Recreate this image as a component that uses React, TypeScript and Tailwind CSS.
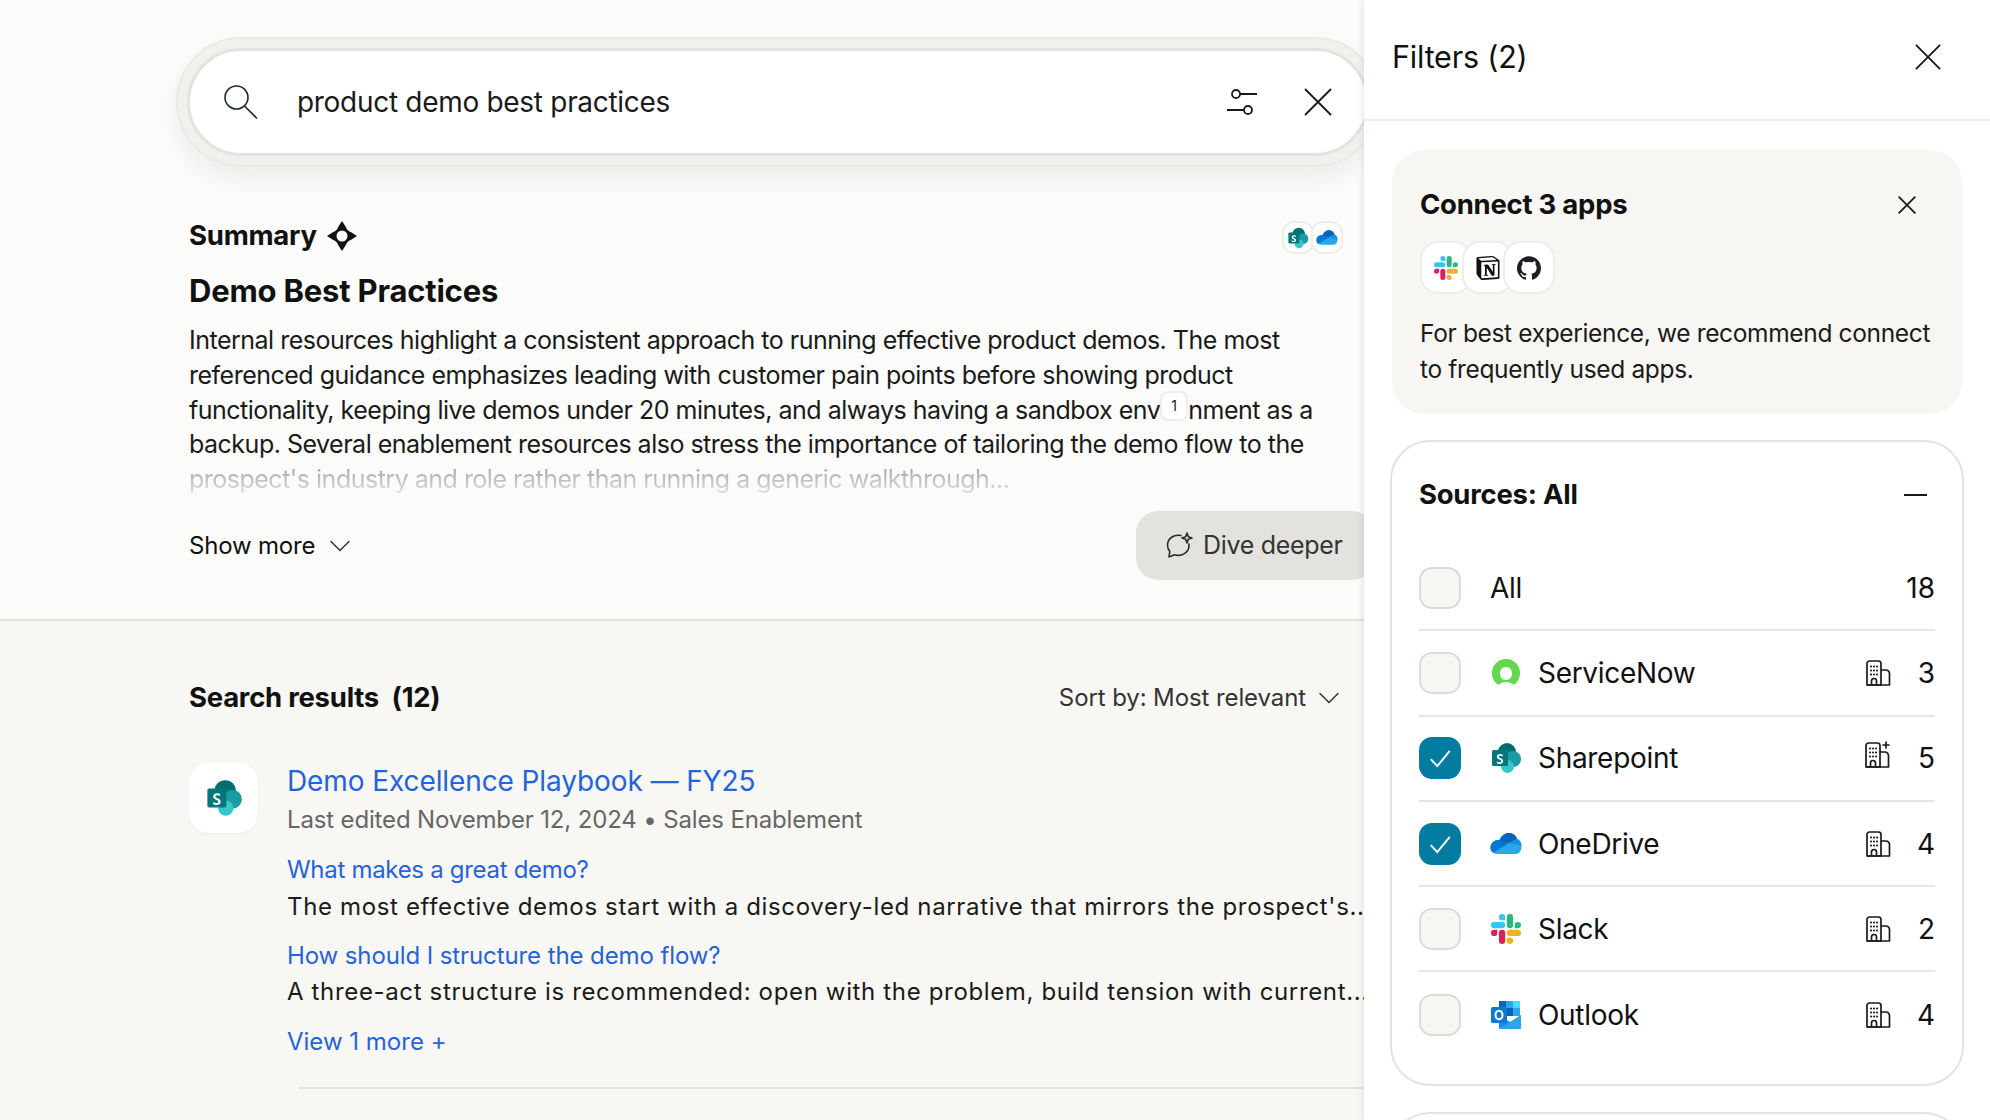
import React from "react";
import { ChevronDown } from "lucide-react";
import { SiGithub, SiNotion } from "react-icons/si";

const slackPaths = [
  { fill: "#E01E5A", d: "M5.042 15.165a2.528 2.528 0 0 1-2.52 2.523A2.528 2.528 0 0 1 0 15.165a2.527 2.527 0 0 1 2.522-2.52h2.52v2.52zM6.313 15.165a2.527 2.527 0 0 1 2.521-2.52 2.527 2.527 0 0 1 2.521 2.52v6.313A2.528 2.528 0 0 1 8.834 24a2.528 2.528 0 0 1-2.521-2.522v-6.313z" },
  { fill: "#36C5F0", d: "M8.834 5.042a2.528 2.528 0 0 1-2.521-2.52A2.528 2.528 0 0 1 8.834 0a2.528 2.528 0 0 1 2.521 2.522v2.52H8.834zM8.834 6.313a2.528 2.528 0 0 1 2.521 2.521 2.528 2.528 0 0 1-2.521 2.521H2.522A2.528 2.528 0 0 1 0 8.834a2.528 2.528 0 0 1 2.522-2.521h6.312z" },
  { fill: "#2EB67D", d: "M18.956 8.834a2.528 2.528 0 0 1 2.522-2.521A2.528 2.528 0 0 1 24 8.834a2.528 2.528 0 0 1-2.522 2.521h-2.522V8.834zM17.688 8.834a2.528 2.528 0 0 1-2.523 2.521 2.527 2.527 0 0 1-2.52-2.521V2.522A2.527 2.527 0 0 1 15.165 0a2.528 2.528 0 0 1 2.523 2.522v6.312z" },
  { fill: "#ECB22E", d: "M15.165 18.956a2.528 2.528 0 0 1 2.523 2.522A2.528 2.528 0 0 1 15.165 24a2.527 2.527 0 0 1-2.52-2.522v-2.522h2.52zM15.165 17.688a2.527 2.527 0 0 1-2.52-2.523 2.526 2.526 0 0 1 2.52-2.52h6.313A2.527 2.527 0 0 1 24 15.165a2.528 2.528 0 0 1-2.522 2.523h-6.313z" },
];

function SlackIcon({ className }: { className?: string }) {
  return (
    <svg viewBox="0 0 24 24" className={className}>
      {slackPaths.map((p, i) => (
        <path key={i} d={p.d} fill={p.fill} />
      ))}
    </svg>
  );
}

function SharepointIcon({ className }: { className?: string }) {
  return (
    <svg viewBox="0 0 32 32" className={className}>
      <circle cx="17" cy="10" r="9" fill="#036c70" />
      <circle cx="23" cy="17" r="8" fill="#1a9ba1" />
      <circle cx="17.5" cy="24.5" r="6.5" fill="#37c6d0" />
      <rect x="2" y="8" width="16" height="16" rx="1.5" fill="#03787c" />
      <path d="M6.8 19.4c.9.6 1.9.9 2.8.9 1.1 0 1.7-.4 1.7-1.1 0-.6-.4-1-1.7-1.5-1.8-.7-2.7-1.5-2.7-2.9 0-1.6 1.3-2.7 3.3-2.7 1 0 1.9.2 2.5.5v1.8c-.7-.4-1.5-.7-2.4-.7-1 0-1.5.4-1.5 1 0 .6.5.9 1.8 1.5 1.8.7 2.6 1.5 2.6 2.9 0 1.8-1.4 2.8-3.6 2.8-1 0-2-.2-2.6-.6z" fill="#fff" />
    </svg>
  );
}

function OneDriveIcon({ className }: { className?: string }) {
  const id = React.useId();
  return (
    <svg viewBox="0 0 32 22" className={className}>
      <defs>
        <clipPath id={id}>
          <path d="M7 21.5C3 21.5.5 18.5.5 15 .5 10.5 4.5 7 9.5 7.5 11.5 3 15 .5 19 .5c4 0 7 2.500 8 6 3 1 4.500 4 4.500 7.500 0 4.500-2.500 7.500-5.500 7.500z" />
        </clipPath>
      </defs>
      <g clipPath={`url(#${id})`}>
        <rect width="32" height="22" fill="#28a8ea" />
        <polygon points="0,0 19,0 19,10.500 2,21 0,21" fill="#0078d4" />
        <polygon points="9.500,8 17,0 27,0 27,6.500 19,10.500" fill="#0364b8" />
        <polygon points="27,6.500 32,6.500 32,13.500 19,10.500" fill="#1490df" />
      </g>
    </svg>
  );
}

function OutlookIcon({ className }: { className?: string }) {
  return (
    <svg viewBox="0 0 32 32" className={className}>
      <path d="M9 2h21v15H9z" fill="#0078d4" />
      <path d="M9 2h7v7H9z" fill="#0364b8" />
      <path d="M23 2h7v7h-7z" fill="#50d9ff" />
      <path d="M16 2h7v7h-7z" fill="#28a8ea" />
      <path d="M16 9h7v8h-7z" fill="#0364b8" />
      <path d="M23 9h7v8h-7z" fill="#28a8ea" />
      <path d="M9 16l11 7 11-7v13a1 1 0 0 1-1 1H10a1 1 0 0 1-1-1z" fill="#1490df" />
      <path d="M9 30l22-13v12a1 1 0 0 1-1 1z" fill="#28a8ea" />
      <rect x="1" y="8" width="16" height="16" rx="1.5" fill="#0f78d4" />
      <ellipse cx="9" cy="16" rx="3.5" ry="4.3" fill="none" stroke="#fff" strokeWidth="2" />
    </svg>
  );
}

function ServiceNowIcon({ className }: { className?: string }) {
  return (
    <svg viewBox="0 0 32 32" className={className}>
      <path
        d="M16 1C7.500 1 1 7.700 1 16c0 4.500 1.900 8.500 5 11.500.9.900 2.200 1 3.200.2 1.900-1.400 4.200-2.200 6.800-2.200s4.900.8 6.800 2.200c1 .8 2.300.7 3.200-.2 3.100-3 5-7 5-11.500C31 7.700 24.500 1 16 1zm0 22.500c-3.800 0-6.500-3-6.500-7s2.700-7 6.500-7 6.500 3 6.500 7-2.700 7-6.500 7z"
        fill="#62d84e"
      />
    </svg>
  );
}

function BuildingIcon({ plus }: { plus?: boolean }) {
  return (
    <svg viewBox="0 0 28 28" fill="none" stroke="#1a1a1a" strokeWidth="1.7" strokeLinejoin="round" className="w-[28px] h-[28px]">
      <path d="M3 26V4.500A2.500 2.500 0 0 1 5.500 2h9A2.500 2.500 0 0 1 17 4.500V26z" />
      <path d="M17 11h5a3.500 3.500 0 0 1 3.500 3.500V26H3" />
      <path d="M7.500 26v-4a2.500 2.500 0 0 1 5 0v4" />
      <path d="M7 7.500h.1M10 7.500h.1M13 7.500h.1M7 11.500h.1M10 11.500h.1M13 11.500h.1M7 15.500h.1M10 15.500h.1M13 15.500h.1" strokeWidth="2" strokeLinecap="round" />
      {plus && <path d="M23 1v6M20 4h6" strokeLinecap="round" />}
    </svg>
  );
}

function SearchIcon() {
  return (
    <svg viewBox="0 0 34 34" fill="none" stroke="#1f2a37" strokeWidth="1.6" className="w-[34px] h-[34px]">
      <circle cx="12.500" cy="12.500" r="11.500" />
      <path d="M20.500 21l12.500 12.500" />
    </svg>
  );
}

function SlidersIcon() {
  return (
    <svg viewBox="0 0 32 28" fill="none" stroke="#1a1a1a" strokeWidth="1.8" className="w-[32px] h-[28px]">
      <circle cx="10" cy="6" r="4" />
      <path d="M14 6h17M1 22h17" />
      <circle cx="22" cy="22" r="4" />
    </svg>
  );
}

function CrossIcon({ className, weight }: { className: string; weight: number }) {
  return (
    <svg viewBox="0 0 28 28" fill="none" stroke="#1a1a1a" strokeWidth={weight} className={className}>
      <path d="M1 1l26 26M27 1L1 27" />
    </svg>
  );
}

function SparkIcon() {
  return (
    <svg viewBox="0 0 30 30" className="w-[30px] h-[30px]">
      <path d="M15 0l3.600 5.400a9 9 0 0 0 6 6L30 15l-5.400 3.600a9 9 0 0 0-6 6L15 30l-3.600-5.400a9 9 0 0 0-6-6L0 15l5.400-3.600a9 9 0 0 0 6-6zM15 9.500a5.500 5.500 0 1 0 0 11 5.500 5.500 0 0 0 0-11z" fill="#111" fillRule="evenodd" />
    </svg>
  );
}

function ChatSparkIcon() {
  return (
    <svg viewBox="0 0 28 28" fill="none" stroke="#2a2a2a" strokeWidth="1.6" strokeLinecap="round" strokeLinejoin="round" className="w-[28px] h-[28px]">
      <path d="M16 3.500C9 2 2.500 6.500 2.500 13c0 2.500.8 4.700 2.300 6.500L4 25l5.500-2.200c7 2.200 14.500-2.300 14.500-9.300 0-.5 0-1-.1-1.500" />
      <path d="M22 1l1.300 3.700L27 6l-3.700 1.300L22 11l-1.300-3.700L17 6l3.700-1.300z" />
    </svg>
  );
}

function Chip({ children, className }: { children: React.ReactNode; className: string }) {
  return (
    <div className={`flex items-center justify-center bg-white border-2 border-[#eeede9] ${className}`}>{children}</div>
  );
}

type Source = {
  name: string;
  count: number;
  checked?: boolean;
  plus?: boolean;
  icon?: React.ReactNode;
};

const sources: Source[] = [
  { name: "All", count: 18 },
  { name: "ServiceNow", count: 3, icon: <ServiceNowIcon className="w-[30px] h-[30px]" /> },
  { name: "Sharepoint", count: 5, checked: true, plus: true, icon: <SharepointIcon className="w-[32px] h-[32px]" /> },
  { name: "OneDrive", count: 4, checked: true, icon: <OneDriveIcon className="w-[34px] h-[23px]" /> },
  { name: "Slack", count: 2, icon: <SlackIcon className="w-[30px] h-[30px]" /> },
  { name: "Outlook", count: 4, icon: <OutlookIcon className="w-[32px] h-[32px]" /> },
];

function SourceRow({ source, last }: { source: Source; last: boolean }) {
  return (
    <div className={`flex items-center h-[85.3px] ${last ? "" : "border-b-2 border-[#e6e5e1]"}`}>
      {source.checked ? (
        <div className="w-[42px] h-[42px] rounded-[13px] bg-[#047c9f] flex items-center justify-center">
          <svg viewBox="0 0 24 24" fill="none" stroke="#fff" strokeWidth="1.8" className="w-[26px] h-[26px]">
            <path d="M3.500 13l6 6.500L21 5.500" />
          </svg>
        </div>
      ) : (
        <div className="w-[42px] h-[42px] rounded-[13px] bg-[#f7f6f3] border-2 border-[#dcdbd6]" />
      )}
      {source.icon ? (
        <div className="w-[32px] ml-[29px] mr-[16px] flex justify-center">{source.icon}</div>
      ) : (
        <div className="w-[29px]" />
      )}
      <span className="flex-1 text-[28px] tracking-[-0.3px] text-[#111]">{source.name}</span>
      {source.icon && (
        <span className={source.plus ? "mr-[10px] -mt-[6px]" : "mr-[9px]"}>
          <BuildingIcon plus={source.plus} />
        </span>
      )}
      <span className="text-[28px] text-[#111] w-[34px] text-right">{source.count}</span>
    </div>
  );
}

export default function App() {
  return (
    <div className="w-[1990px] h-[1120px] overflow-hidden flex bg-[#fbfbf9] text-[#111] font-['Inter','Liberation_Sans',sans-serif]">
      <main className="w-[1364px] shrink-0 flex flex-col overflow-hidden">
        <section className="pt-[37px] pl-[176px] h-[621px] shrink-0 border-b-2 border-[#e4e3df]">
          <div className="w-[1204px] h-[130px] rounded-[65px] bg-[#f1f0ec] border-2 border-[#eae9e5] p-[9px] shadow-[0_12px_24px_rgba(0,0,0,0.06)]">
            <div className="h-full rounded-[56px] bg-white border-[3px] border-[#e4e3df] flex items-center pl-[34px] pr-[34px]">
              <SearchIcon />
              <span className="ml-[39px] flex-1 text-[28px] tracking-[-0.3px] text-[#1a1a1a]">product demo best practices</span>
              <SlidersIcon />
              <CrossIcon className="ml-[46px] w-[28px] h-[28px]" weight={1.8} />
            </div>
          </div>

          <div className="pl-[13px] pr-[21px] mt-[51px]">
            <div className="flex items-center justify-between h-[36px]">
              <div className="flex items-center gap-[10px]">
                <span className="text-[27.5px] font-bold tracking-[-0.25px]">Summary</span>
                <SparkIcon />
              </div>
              <div className="flex -space-x-[3px] mt-[3px]">
                <Chip className="w-[32px] h-[33px] rounded-[12px]">
                  <SharepointIcon className="w-[22px] h-[22px]" />
                </Chip>
                <Chip className="w-[32px] h-[33px] rounded-[12px]">
                  <OneDriveIcon className="w-[22px] h-[15px]" />
                </Chip>
              </div>
            </div>
            <h1 className="mt-[17px] text-[31px] leading-[40px] font-bold tracking-[-0.2px]">Demo Best Practices</h1>
            <div className="mt-[12px] text-[25px] leading-[34.8px] tracking-[-0.5px] text-[#1a1a1a]">
              <p>Internal resources highlight a consistent approach to running effective product demos. The most</p>
              <p>referenced guidance emphasizes leading with customer pain points before showing product</p>
              <p>
                functionality, keeping live demos under 20 minutes, and always having a sandbox env
                <span className="inline-flex items-center justify-center align-top w-[28px] h-[30px] -mt-[2px] rounded-[8px] bg-white border-2 border-[#eeede9] text-[14px] leading-none tracking-normal">
                  1
                </span>
                nment as a
              </p>
              <p>backup. Several enablement resources also stress the importance of tailoring the demo flow to the</p>
              <p className="bg-gradient-to-b from-[#9a9a98] to-[#e8e8e6] bg-clip-text text-transparent">
                prospect's industry and role rather than running a generic walkthrough...
              </p>
            </div>
            <div className="flex items-center justify-between mt-[14.5px] -mr-[21px]">
              <div className="flex items-center gap-[7px] text-[24px] tracking-[-0.2px]">
                Show more
                <ChevronDown className="w-[36px] h-[36px] text-[#333]" strokeWidth={1} />
              </div>
              <div className="w-[238px] h-[69px] -mr-[10px] shrink-0 rounded-[22px] bg-[#e3e2de] flex items-center gap-[10px] pl-[29px] text-[25px] tracking-[-0.3px] text-[#333]">
                <ChatSparkIcon />
                Dive deeper
              </div>
            </div>
          </div>
        </section>

        <section className="flex-1 bg-[#f8f7f4] pl-[189px]">
          <div className="flex items-center justify-between h-[36px] mt-[59px] pr-[17px]">
            <span className="text-[27.5px] font-bold tracking-[-0.25px]">
              Search results&nbsp; (12)
            </span>
            <div className="flex items-center gap-[5px] text-[24px] tracking-[-0.1px] text-[#333]">
              Sort by: Most relevant
              <ChevronDown className="w-[36px] h-[36px] text-[#333]" strokeWidth={1} />
            </div>
          </div>
          <div className="flex mt-[47px]">
            <div className="w-[69px] h-[70px] shrink-0 rounded-[20px] bg-white shadow-[0_1px_3px_rgba(0,0,0,0.05)] flex items-center justify-center">
              <SharepointIcon className="w-[38px] h-[38px]" />
            </div>
            <div className="ml-[29px] w-[1077px] overflow-hidden whitespace-nowrap">
              <div className="text-[28px] leading-[36px] tracking-[-0.1px] text-[#2563d9]">Demo Excellence Playbook — FY25</div>
              <div className="mt-[3px] text-[24px] leading-[36px] tracking-[-0.15px] text-[#666]">Last edited November 12, 2024 • Sales Enablement</div>
              <div className="mt-[15px] text-[24px] leading-[34px] tracking-[-0.3px] text-[#2563d9]">What makes a great demo?</div>
              <div className="mt-[3px] text-[24px] leading-[34px] text-[#1a1a1a] tracking-[0.65px]">The most effective demos start with a discovery-led narrative that mirrors the prospect's...</div>
              <div className="mt-[15px] text-[24px] leading-[34px] tracking-[-0.1px] text-[#2563d9]">How should I structure the demo flow?</div>
              <div className="mt-[2px] text-[24px] leading-[34px] text-[#1a1a1a] tracking-[0.65px]">A three-act structure is recommended: open with the problem, build tension with current...</div>
              <div className="mt-[16px] text-[24px] leading-[34px] text-[#2563d9]">View 1 more +</div>
            </div>
          </div>
          <div className="mt-[28px] ml-[110px] border-t-2 border-[#e4e3df]" />
        </section>
      </main>

      <aside className="relative z-10 w-[626px] shrink-0 bg-white shadow-[-2px_0_6px_rgba(0,0,0,0.08)] flex flex-col">
        <header className="h-[121px] shrink-0 border-b-2 border-[#eeede9] flex items-center justify-between pb-[6px] pl-[28px] pr-[49px]">
          <span className="text-[30.5px] tracking-[-0.2px]">Filters (2)</span>
          <CrossIcon className="w-[26px] h-[26px]" weight={2} />
        </header>
        <div className="px-[28px] pt-[29px]">
          <div className="w-[570px] h-[264px] rounded-[32px] bg-[#f7f6f3] pl-[28px] pr-[20px] pt-[37px]">
            <div className="flex items-center justify-between h-[36px]">
              <span className="text-[27.5px] font-bold tracking-[-0.25px]">Connect 3 apps</span>
              <CrossIcon className="w-[18px] h-[18px] mr-[26px]" weight={2.8} />
            </div>
            <div className="flex mt-[18px] -space-x-[10.5px]">
              <Chip className="w-[52px] h-[53px] rounded-[18px]">
                <SlackIcon className="w-[24px] h-[24px]" />
              </Chip>
              <Chip className="w-[52px] h-[53px] rounded-[18px]">
                <SiNotion className="w-[24px] h-[24px] text-[#111]" />
              </Chip>
              <Chip className="w-[52px] h-[53px] rounded-[18px]">
                <SiGithub className="w-[24px] h-[24px] text-[#1b1f23]" />
              </Chip>
            </div>
            <p className="mt-[21px] text-[24.5px] leading-[36px] tracking-[-0.35px] text-[#1a1a1a]">
              For best experience, we recommend connect to frequently used apps.
            </p>
          </div>
          <div className="w-[574px] -ml-[2px] mt-[26px] h-[646px] rounded-[40px] border-2 border-[#e4e3df] px-[27px] pt-[35px]">
            <div className="flex items-center justify-between h-[36px]">
              <span className="text-[27.5px] font-bold tracking-[-0.25px]">Sources: All</span>
              <div className="w-[23px] h-[2px] bg-[#1a1a1a] mr-[8px]" />
            </div>
            <div className="mt-[33px]">
              {sources.map((s, i) => (
                <SourceRow key={s.name} source={s} last={i === sources.length - 1} />
              ))}
            </div>
          </div>
          <div className="w-[574px] -ml-[2px] mt-[26px] h-[100px] rounded-[40px] border-2 border-[#e4e3df]" />
        </div>
      </aside>
    </div>
  );
}
